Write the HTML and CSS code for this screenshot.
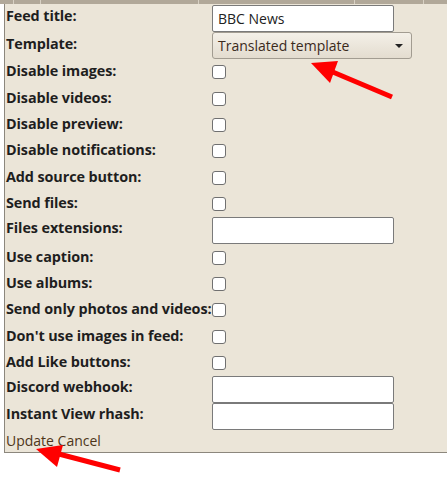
FILE: index.html
```html
<!DOCTYPE html>
<html lang="en">
<head>
  <meta charset="UTF-8">
  <title>Edit feed</title>
  <link rel="stylesheet" href="styles.css">
</head>
<body>
  <div class="topbar">
    <span class="col" style="width: 14px"></span>
    <span class="col" style="width: 27px"></span>
    <span class="col" style="width: 158px"></span>
    <span class="col" style="width: 156px"></span>
    <span class="col" style="width: 69px"></span>
    <span class="col"></span>
  </div>

  <div class="panel">
    <div class="row text-row">
      <label class="name">Feed title:</label>
      <input class="field" type="text" value="BBC News">
    </div>
    <div class="row select-row">
      <label class="name">Template:</label>
      <div class="select">Translated template<span class="caret"></span></div>
    </div>
    <div class="row"><label class="name">Disable images:</label><input class="check" type="checkbox"></div>
    <div class="row"><label class="name">Disable videos:</label><input class="check" type="checkbox"></div>
    <div class="row"><label class="name">Disable preview:</label><input class="check" type="checkbox"></div>
    <div class="row"><label class="name">Disable notifications:</label><input class="check" type="checkbox"></div>
    <div class="row"><label class="name">Add source button:</label><input class="check" type="checkbox"></div>
    <div class="row"><label class="name">Send files:</label><input class="check" type="checkbox"></div>
    <div class="row text-row">
      <label class="name">Files extensions:</label>
      <input class="field" type="text">
    </div>
    <div class="row"><label class="name">Use caption:</label><input class="check" type="checkbox"></div>
    <div class="row"><label class="name">Use albums:</label><input class="check" type="checkbox"></div>
    <div class="row"><label class="name">Send only photos and videos:</label><input class="check" type="checkbox"></div>
    <div class="row"><label class="name">Don't use images in feed:</label><input class="check" type="checkbox"></div>
    <div class="row"><label class="name">Add Like buttons:</label><input class="check" type="checkbox"></div>
    <div class="row text-row">
      <label class="name">Discord webhook:</label>
      <input class="field" type="text">
    </div>
    <div class="row text-row">
      <label class="name">Instant View rhash:</label>
      <input class="field" type="text">
    </div>
    <div class="actions">
      <a href="#" class="link">Update</a> <a href="#" class="link">Cancel</a>
    </div>
  </div>

  <!-- red annotation arrows drawn over the form -->
  <svg class="arrows" width="447" height="479" viewBox="0 0 447 479">
    <line x1="392" y1="97" x2="328" y2="70" stroke="#f00" stroke-width="5"/>
    <polygon points="311,63 338,61 330,83" fill="#f00"/>
    <line x1="120" y1="470" x2="55" y2="453" stroke="#f00" stroke-width="5"/>
    <polygon points="36,449 63,445 57,467" fill="#f00"/>
  </svg>
</body>
</html>
```

FILE: styles.css
```css
* {
  box-sizing: border-box;
}

html {
  background: #fff;
}

body {
  margin: 0;
  min-height: 479px;
  font-family: 'Open Sans', sans-serif;
  color: #1e1e1e;
  position: relative;
}

.topbar {
  display: flex;
  height: 4px;
  background: #b1a899;
}

.topbar .col {
  height: 4px;
  border-right: 1px solid #d8d1c4;
}

.topbar .col:last-child {
  flex: 1;
  border-right: none;
}

.panel {
  margin-left: 4px;
  height: 449px;
  padding: 1px 0 0 1px;
  background: #ebe5d8;
  border-left: 1px solid #8c877d;
  border-bottom: 1px solid #8c877d;
}

.row {
  display: flex;
  align-items: center;
  height: 26.4px;
}

.text-row,
.select-row {
  height: 27px;
}

.name {
  width: 206px;
  font-weight: 700;
  font-size: 14.4px;
  line-height: 18px;
  padding-bottom: 2px;
  white-space: nowrap;
  letter-spacing: -0.1px;
}

.text-row .name {
  padding-bottom: 5px;
}

.select-row .name {
  padding-bottom: 3px;
}

.field {
  width: 182px;
  height: 27px;
  margin: 0;
  padding: 0 5px;
  border: 1px solid #7a7a7a;
  border-radius: 2px;
  background: #fff;
  font-family: 'Open Sans', sans-serif;
  font-size: 14px;
  color: #222;
}

.select {
  position: relative;
  width: 200px;
  height: 27px;
  padding: 0 5px;
  border: 1px solid #a29c91;
  border-radius: 3px;
  background: linear-gradient(#f4f0e8, #e3dccf);
  font-size: 14px;
  line-height: 25px;
  color: #3b2a1c;
}

.caret {
  position: absolute;
  right: 8px;
  top: 11px;
  border-left: 4px solid transparent;
  border-right: 4px solid transparent;
  border-top: 4px solid #222;
}

.check {
  -webkit-appearance: none;
  appearance: none;
  width: 14px;
  height: 14px;
  margin: 0;
  border: 1px solid #707070;
  border-radius: 3px;
  background: #fff;
}

.actions {
  height: 21px;
  font-size: 14px;
  line-height: 21px;
}

.link {
  color: #4e3519;
  text-decoration: none;
}

.arrows {
  position: absolute;
  left: 0;
  top: 0;
  pointer-events: none;
}
```
